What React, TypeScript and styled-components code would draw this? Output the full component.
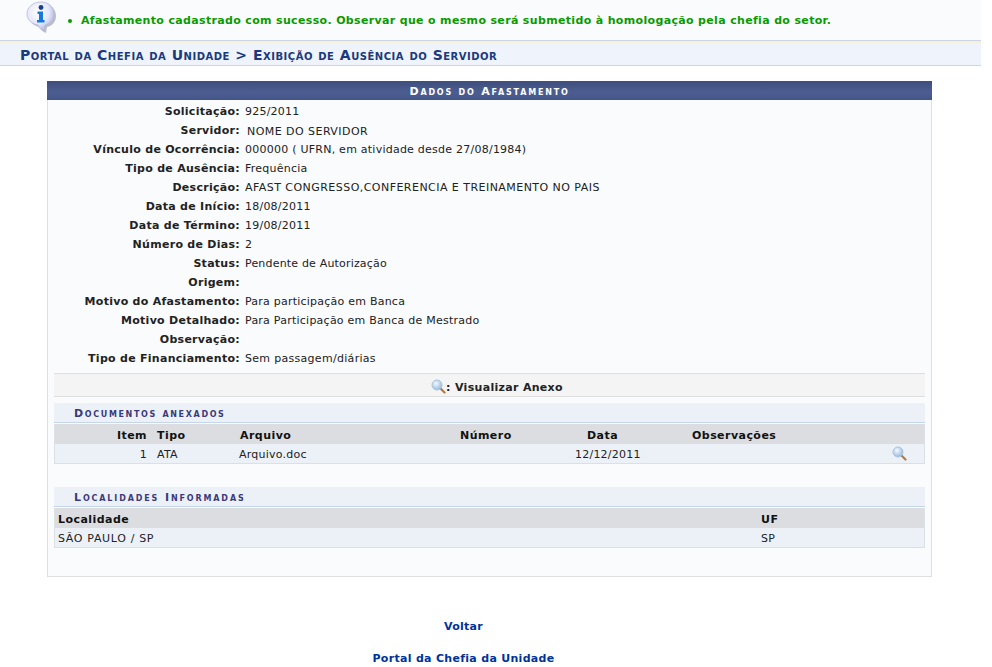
import React from "react";
import styled, { createGlobalStyle } from "styled-components";

const Global = createGlobalStyle`
  html, body { margin: 0; padding: 0; background: #fff; }
  body { font-family: "DejaVu Sans", Verdana, sans-serif; font-size: 11px; color: #222; letter-spacing: 0.23px; }
`;
const Page = styled.div`width: 981px; height: 667px; overflow: hidden;`;
const MessageBar = styled.div`
  height: 40px; background: #fafbfd; border-bottom: 1px solid #c9d6e6;
  display: flex; align-items: flex-start; padding-left: 26px;
`;
const MessageText = styled.ul`
  margin: 14px 0 0 10px; padding: 0; list-style: none; color: #0a9a00; font-weight: bold; font-size: 11px;
  line-height: 14px; letter-spacing: 0.34px; white-space: nowrap;
`;
const Bullet = styled.li`
  display: flex; align-items: center; gap: 9px;
  &::before { content: ""; width: 4px; height: 4px; border-radius: 50%; background: #0a9a00; }
`;
const TitleBar = styled.h2`
  margin: 0; height: 22px; background: #eff3fb; border-top: 2px solid #f5efdd; border-bottom: 1px solid #c9d6e6;
  padding-left: 20px; font-size: 14px; line-height: 25px; font-variant: small-caps; color: #1a3a7c; font-weight: bold;
  letter-spacing: 0.51px; white-space: nowrap;
`;
const Panel = styled.section`
  margin: 15px 0 0 47px; width: 885px; height: 496px; box-sizing: border-box; background: #f9fbfd;
  border: 1px solid #dfdfe3; border-top: none; display: flex; flex-direction: column;
`;
const PanelHead = styled.h3`
  margin: 0 -1px; height: 19px; line-height: 21px; text-align: center; color: #fff; font-size: 11px; font-weight: bold;
  font-variant: small-caps; letter-spacing: 1.8px;
  background: linear-gradient(#3e4d7e, #4c5e90 60%, #44548a);
`;
const Fields = styled.dl`
  margin: 2px 0 0; display: grid; grid-template-columns: 192px 1fr; column-gap: 5px; grid-auto-rows: 19px; line-height: 19px;
`;
const Label = styled.dt`font-weight: bold; text-align: right; color: #222; letter-spacing: 0.28px;`;
const Value = styled.dd<{ $tracking: number; $nudge: boolean }>`
  margin: 0; white-space: nowrap; letter-spacing: ${p => p.$tracking}px;
  padding: ${p => (p.$nudge ? "1px 0 0 2px" : "0")};
`;
const Legend = styled.div`
  margin: 5px 6px 0; height: 22px; background: #f4f4f4; border-top: 1px solid #dedede; border-bottom: 1px solid #dedede;
  display: flex; align-items: flex-end; justify-content: center; font-weight: bold; letter-spacing: 0.31px;
  line-height: 17px; padding-left: 15px;
`;
const LegendIcon = styled.span`align-self: flex-start; margin-top: 5px; display: flex;`;
const Section = styled.div<{ $top: number }>`margin: ${p => p.$top}px 6px 0;`;
const SectionHead = styled.h4<{ $tracking: number }>`
  margin: 0; height: 19px; line-height: 21px; background: #ecf1f8; border-bottom: 1px solid #c4d5ec; padding-left: 20px;
  font-size: 11px; font-weight: bold; font-variant: small-caps; letter-spacing: ${p => p.$tracking}px; color: #3a3a7a;
`;
const Table = styled.table`
  width: 100%; border-collapse: separate; border-spacing: 0; table-layout: fixed; margin-top: 1px;
  border-bottom: 1px solid #dcdfe3; border-right: 1px solid #dcdfe3; border-left: 1px solid #dcdfe3;
`;
const Th = styled.th<{ $w?: number; $right?: boolean; $pl?: number }>`
  box-sizing: border-box; width: ${p => (p.$w ? p.$w + "px" : "auto")}; height: 20px;
  padding: 2px 0 0 ${p => p.$pl ?? 0}px; background: #dcdde0; color: #111;
  text-align: ${p => (p.$right ? "right" : "left")}; font-size: 11px; font-weight: bold; letter-spacing: 0.45px;
`;
const Td = styled.td<{ $right?: boolean; $pl?: number; $tracking?: number }>`
  box-sizing: border-box; height: 19px; padding: 2px 0 0 ${p => p.$pl ?? 0}px; background: #ecf1f8; color: #222; font-size: 11px;
  text-align: ${p => (p.$right ? "right" : "left")}; white-space: nowrap; letter-spacing: ${p => p.$tracking ?? 0.23}px;
`;
const IconTd = styled.td`
  box-sizing: border-box; height: 19px; padding: 0 0 1px; background: #ecf1f8;
`;
const Links = styled.nav`
  width: 927px; display: flex; flex-direction: column; align-items: center; gap: 18px; margin-top: 43px;
`;
const LinkItem = styled.a`color: #003399; font-weight: bold; font-size: 11px; line-height: 14px; letter-spacing: 0.3px; text-decoration: none;`;
const InfoSvg = styled.svg`flex: none; display: block;`;
const LensSvg = styled.svg`flex: none; display: block;`;

const InfoIcon = () => (
  <InfoSvg width="32" height="34" viewBox="0 0 32 34">
    <defs>
      <radialGradient id="b" cx="40%" cy="35%" r="70%">
        <stop offset="0" stopColor="#ffffff" />
        <stop offset="0.6" stopColor="#e4e6fb" />
        <stop offset="1" stopColor="#a9aedb" />
      </radialGradient>
    </defs>
    <path d="M16 3c8 0 13 5 13 12 0 6-4 10-9 11l-1 6c-3-1-5-3-6-6C7 25 2 21 2 15 2 8 8 3 16 3z" fill="#8a8a98" opacity=".55" transform="translate(1 1)" />
    <path d="M15 2c8 0 13 5 13 12 0 6-4 10-9 11l-1 6c-3-1-5-3-6-6C6 24 1 20 1 14 1 7 7 2 15 2z" fill="url(#b)" stroke="#b6b9d6" strokeWidth=".8" />
    <circle cx="15" cy="7.5" r="2.4" fill="#14408f" />
    <path d="M11.500 11.500h5.500v8.500h1.500v2.500h-7.500v-2.500h2v-6h-1.500z" fill="#1479dd" />
  </InfoSvg>
);
const Lens = () => (
  <LensSvg width="15" height="15" viewBox="0 0 15 15">
    <defs>
      <radialGradient id="l" cx="40%" cy="35%" r="70%">
        <stop offset="0" stopColor="#f4f9ff" />
        <stop offset="1" stopColor="#8fb6dc" />
      </radialGradient>
    </defs>
    <path d="M9.500 9.500l4 4" stroke="#b9773d" strokeWidth="2.200" strokeLinecap="round" />
    <circle cx="6" cy="6" r="5" fill="url(#l)" stroke="#a8c4de" strokeWidth="1" />
  </LensSvg>
);

const fields: [string, string, number][] = [
  ["Solicitação:", "925/2011", 0.23],
  ["Servidor:", "NOME DO SERVIDOR", 0.45],
  ["Vínculo de Ocorrência:", "000000 ( UFRN, em atividade desde 27/08/1984)", 0.24],
  ["Tipo de Ausência:", "Frequência", 0.23],
  ["Descrição:", "AFAST CONGRESSO,CONFERENCIA E TREINAMENTO NO PAIS", 0.46],
  ["Data de Início:", "18/08/2011", 0.23],
  ["Data de Término:", "19/08/2011", 0.23],
  ["Número de Dias:", "2", 0.23],
  ["Status:", "Pendente de Autorização", 0.18],
  ["Origem:", "", 0],
  ["Motivo do Afastamento:", "Para participação em Banca", 0.23],
  ["Motivo Detalhado:", "Para Participação em Banca de Mestrado", 0.24],
  ["Observação:", "", 0],
  ["Tipo de Financiamento:", "Sem passagem/diárias", 0.3],
];

export default function App() {
  return (
    <Page>
      <Global />
      <MessageBar>
        <InfoIcon />
        <MessageText>
          <Bullet>Afastamento cadastrado com sucesso. Observar que o mesmo será submetido à homologação pela chefia do setor.</Bullet>
        </MessageText>
      </MessageBar>
      <TitleBar>Portal da Chefia da Unidade &gt; Exibição de Ausência do Servidor</TitleBar>
      <Panel>
        <PanelHead>Dados do Afastamento</PanelHead>
        <Fields>
          {fields.map(([l, v, t]) => (
            <React.Fragment key={l}>
              <Label>{l}</Label>
              <Value $tracking={t} $nudge={l === "Servidor:"}>{v}</Value>
            </React.Fragment>
          ))}
        </Fields>
        <Legend><LegendIcon><Lens /></LegendIcon>: Visualizar Anexo</Legend>
        <Section $top={6}>
          <SectionHead $tracking={1.65}>Documentos anexados</SectionHead>
          <Table>
            <thead>
              <tr>
                <Th $w={92} $right>Item</Th>
                <Th $w={92} $pl={10}>Tipo</Th>
                <Th $w={221} $pl={1}>Arquivo</Th>
                <Th $w={115}>Número</Th>
                <Th $w={117} $pl={12}>Data</Th>
                <Th $w={200}>Observações</Th>
                <Th />
              </tr>
            </thead>
            <tbody>
              <tr>
                <Td $right>1</Td>
                <Td $pl={10}>ATA</Td>
                <Td>Arquivo.doc</Td>
                <Td />
                <Td>12/12/2011</Td>
                <Td />
                <IconTd><Lens /></IconTd>
              </tr>
            </tbody>
          </Table>
        </Section>
        <Section $top={23}>
          <SectionHead $tracking={1.87}>Localidades Informadas</SectionHead>
          <Table>
            <thead>
              <tr>
                <Th $w={706} $pl={3}>Localidade</Th>
                <Th>UF</Th>
              </tr>
            </thead>
            <tbody>
              <tr>
                <Td $pl={3} $tracking={0.66}>SÃO PAULO / SP</Td>
                <Td>SP</Td>
              </tr>
            </tbody>
          </Table>
        </Section>
      </Panel>
      <Links>
        <LinkItem href="#">Voltar</LinkItem>
        <LinkItem href="#">Portal da Chefia da Unidade</LinkItem>
      </Links>
    </Page>
  );
}
